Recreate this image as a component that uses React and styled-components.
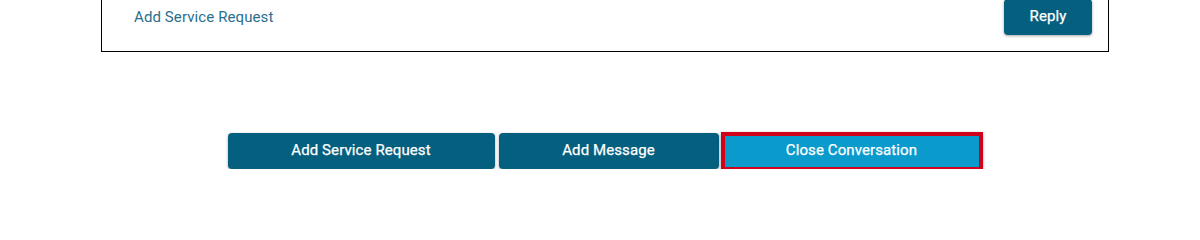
import styled, { createGlobalStyle } from 'styled-components'

const GlobalStyle = createGlobalStyle`
  html, body {
    margin: 0;
    padding: 0;
    background: #fff;
    font-family: Roboto, "Liberation Sans", Arial, sans-serif;
    overflow: hidden;
  }
`

const Page = styled.div`
  width: 1008px;
  margin-left: 101px;
`

const Card = styled.div`
  margin-top: -18px;
  border: 1px solid #000;
  padding: 16px 16px 16px 32px;
`

const CardRow = styled.div`
  display: flex;
  align-items: center;
  justify-content: space-between;
  height: 36px;
`

const LinkText = styled.a`
  font-size: 15px;
  letter-spacing: 0.1px;
  color: #2a6f8e;
  text-decoration: none;
  cursor: pointer;
`

const Button = styled.button`
  height: 36px;
  width: ${({ $w }) => $w}px;
  padding: 0 0 2px;
  border: none;
  border-radius: 4px;
  background: #05607f;
  color: #fff;
  font-family: Roboto, "Liberation Sans", Arial, sans-serif;
  font-size: 15px;
  font-weight: 400;
  letter-spacing: 0.1px;
  -webkit-text-stroke: 0.25px #fff;
  box-shadow: 0 1px 3px rgba(0, 0, 0, 0.35);
  cursor: pointer;
`

const FocusButton = styled(Button)`
  height: 39px;
  margin-left: -2px;
  border: 4px solid #d0021b;
  border-radius: 0;
  background: #0b9acc;
`

const Actions = styled.div`
  display: flex;
  align-items: center;
  justify-content: center;
  gap: 4px;
  margin-top: 81px;
  height: 36px;
`

export default function App() {
  return (
    <>
      <GlobalStyle />
      <Page>
        <Card>
          <CardRow>
            <LinkText>Add Service Request</LinkText>
            <Button $w={88}>Reply</Button>
          </CardRow>
        </Card>

        <Actions>
          <Button $w={267}>Add Service Request</Button>
          <Button $w={220}>Add Message</Button>
          <FocusButton $w={262}>Close Conversation</FocusButton>
        </Actions>
      </Page>
    </>
  )
}
